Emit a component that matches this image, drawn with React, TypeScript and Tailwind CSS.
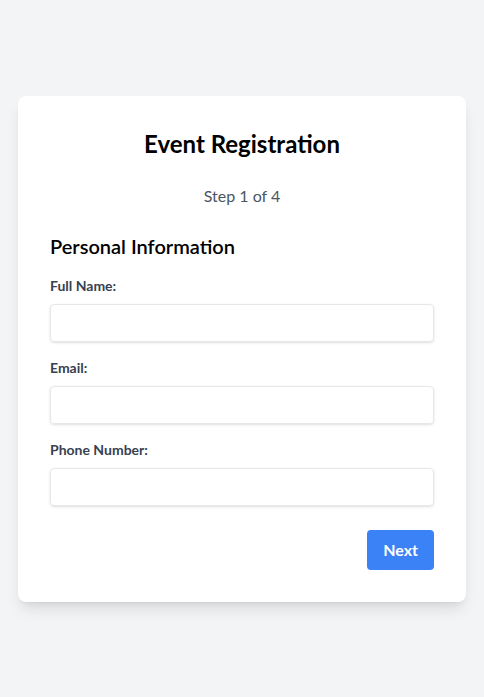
export default function App() {
  return (
    <div className="flex min-h-screen items-center justify-center bg-[#f3f4f6] font-['Lato',_sans-serif]">
      <div className="w-full max-w-md rounded-lg bg-white p-8 shadow-lg">
        <h1 className="mb-6 text-center text-2xl font-bold text-black">Event Registration</h1>
        <p className="mb-6 text-center text-base text-[#4b5563]">Step 1 of 4</p>
        <h2 className="mb-4 text-xl font-semibold text-black">Personal Information</h2>
        <div className="mb-4">
          <label className="mb-2 block text-sm font-bold text-[#374151]">Full Name:</label>
          <input type="text" className="w-full rounded border border-gray-200 px-3 py-2 text-sm shadow" />
        </div>
        <div className="mb-4">
          <label className="mb-2 block text-sm font-bold text-[#374151]">Email:</label>
          <input type="email" className="w-full rounded border border-gray-200 px-3 py-2 text-sm shadow" />
        </div>
        <div className="mb-6">
          <label className="mb-2 block text-sm font-bold text-[#374151]">Phone Number:</label>
          <input type="tel" className="w-full rounded border border-gray-200 px-3 py-2 text-sm shadow" />
        </div>
        <div className="flex justify-end">
          <button className="rounded bg-[#3b82f6] px-4 py-2 font-bold text-white">Next</button>
        </div>
      </div>
    </div>
  );
}
